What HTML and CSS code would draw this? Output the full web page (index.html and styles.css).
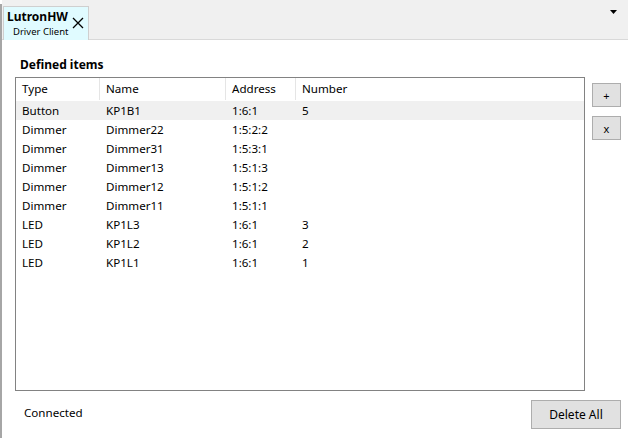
FILE: index.html
```html
<!DOCTYPE html>
<html>
<head>
<meta charset="utf-8">
<link rel="stylesheet" href="styles.css">
</head>
<body>
<div class="app">
  <div class="edge"></div>
  <div class="main">
    <div class="tabbar">
      <div class="tab">
        <div class="tab-text">
          <div class="tab-title">LutronHW</div>
          <div class="tab-sub">Driver Client</div>
        </div>
        <svg class="tab-close" width="12" height="12" viewBox="0 0 12 12"><path d="M1 1L11 11M11 1L1 11" stroke="#000" stroke-width="1.3" fill="none"/></svg>
      </div>
      <svg class="dropdown" width="7" height="4" viewBox="0 0 7 4"><path d="M0 0H7L3.5 4Z" fill="#000"/></svg>
    </div>
    <div class="content">
      <div class="group-title">Defined items</div>
      <div class="row-area">
        <div class="listbox">
          <div class="lrow header">
            <div class="c c1">Type</div><div class="c c2">Name</div><div class="c c3">Address</div><div class="c c4">Number</div>
          </div>
          <div class="lrow sel"><div class="c c1">Button</div><div class="c c2">KP1B1</div><div class="c c3">1:6:1</div><div class="c c4">5</div></div>
          <div class="lrow"><div class="c c1">Dimmer</div><div class="c c2">Dimmer22</div><div class="c c3">1:5:2:2</div><div class="c c4"></div></div>
          <div class="lrow"><div class="c c1">Dimmer</div><div class="c c2">Dimmer31</div><div class="c c3">1:5:3:1</div><div class="c c4"></div></div>
          <div class="lrow"><div class="c c1">Dimmer</div><div class="c c2">Dimmer13</div><div class="c c3">1:5:1:3</div><div class="c c4"></div></div>
          <div class="lrow"><div class="c c1">Dimmer</div><div class="c c2">Dimmer12</div><div class="c c3">1:5:1:2</div><div class="c c4"></div></div>
          <div class="lrow"><div class="c c1">Dimmer</div><div class="c c2">Dimmer11</div><div class="c c3">1:5:1:1</div><div class="c c4"></div></div>
          <div class="lrow"><div class="c c1">LED</div><div class="c c2">KP1L3</div><div class="c c3">1:6:1</div><div class="c c4">3</div></div>
          <div class="lrow"><div class="c c1">LED</div><div class="c c2">KP1L2</div><div class="c c3">1:6:1</div><div class="c c4">2</div></div>
          <div class="lrow"><div class="c c1">LED</div><div class="c c2">KP1L1</div><div class="c c3">1:6:1</div><div class="c c4">1</div></div>
        </div>
        <div class="side-buttons">
          <button class="btn small">+</button>
          <button class="btn small">x</button>
        </div>
      </div>
      <div class="footer">
        <div class="status">Connected</div>
        <button class="btn wide">Delete All</button>
      </div>
    </div>
  </div>
</div>
</body>
</html>
```

FILE: styles.css
```css
* { box-sizing: border-box; }
html, body { margin: 0; padding: 0; background: #fff; }
body {
  width: 628px; height: 438px; overflow: hidden;
  font-family: "Noto Sans", "Open Sans", sans-serif;
  font-size: 11.6px; color: #000;
}
.app { display: flex; height: 438px; }
.edge { width: 3px; background: #a6a6a6; margin-top: 4px; }
.main { flex: 1; display: flex; flex-direction: column; }
.tabbar {
  height: 40px; background: #f0f0f0; border-bottom: 1px solid #d9d9d9;
  display: flex; align-items: flex-start; justify-content: space-between;
  padding: 6px 11px 0 1px;
}
.tab {
  width: 86px; height: 34px; background: #e0fbff;
  border: 1px solid #cfcfcf; border-bottom: none;
  display: flex; align-items: flex-start; padding: 2px 0 0 3px;
}
.tab-text { display: flex; flex-direction: column; width: 65px; flex-shrink: 0; }
.tab-title { font-weight: bold; font-size: 12px; line-height: 16px; }
.tab-sub { font-size: 9.5px; line-height: 13px; padding-left: 6px; }
.tab-close { flex-shrink: 0; margin: 8px 0 0 0; }
.dropdown { margin-top: 4px; }
.content { flex: 1; padding: 18px 7px 0 13px; display: flex; flex-direction: column; }
.group-title { font-weight: bold; font-size: 12px; line-height: 14px; padding-left: 5px; }
.row-area { display: flex; margin-top: 5px; }
.listbox {
  width: 570px; height: 314px; border: 1px solid #828282; background: #fff;
  padding-top: 0;
}
.lrow { display: flex; height: 19px; align-items: center; }
.lrow.header { height: 22px; margin-bottom: 1px; }
.lrow.sel { background: #f0f0f0; }
.c { white-space: nowrap; padding-left: 6px; line-height: 19px; }
.c1 { width: 84px; }
.c2 { width: 126px; }
.c3 { width: 70px; }
.c4 { width: 80px; }
.header .c { border-right: 1px solid #e5e5e5; height: 22px; line-height: 22px; }
.header .c4 { border-right: none; }
.side-buttons { display: flex; flex-direction: column; gap: 9px; margin: 6px 0 0 7px; }
.btn {
  font-family: inherit; font-size: 12px; color: #000;
  background: #e1e1e1; border: 1px solid #adadad; padding: 0;
}
.btn.small { width: 29px; height: 24px; font-size: 11px; }
.footer { display: flex; justify-content: space-between; align-items: flex-start; margin-top: 9px; }
.status { padding: 5px 0 0 9px; }
.btn.wide { width: 90px; height: 29px; }
```
